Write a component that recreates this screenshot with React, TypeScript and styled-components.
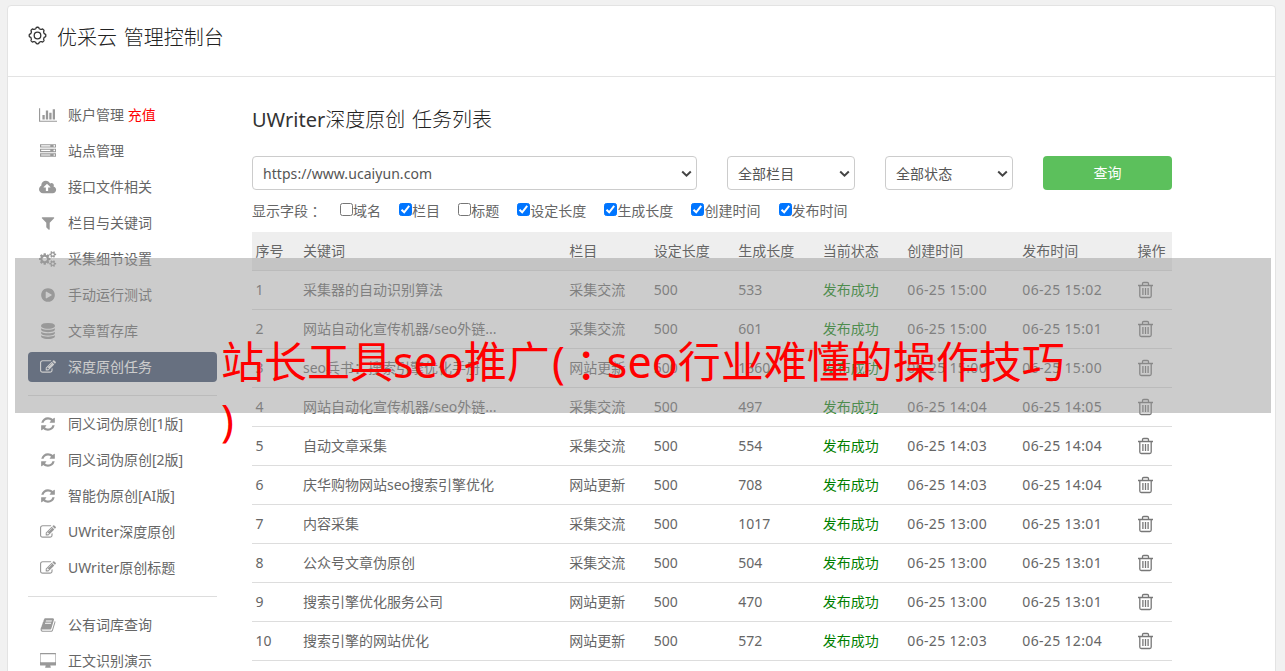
import React from 'react';
import styled, { createGlobalStyle } from 'styled-components';

const GlobalStyle = createGlobalStyle`
  * { box-sizing: border-box; }
  html, body { margin: 0; padding: 0; }
  body {
    height: 671px;
    overflow: hidden;
    background: #f1f1f1;
    color: #666;
    font-family: "Noto Sans", "Noto Sans CJK SC", sans-serif;
    font-weight: 400;
    font-size: 14px;
    line-height: 20px;
  }
`;

const Page = styled.div`
  position: relative;
  height: 671px;
  padding: 5px 9px 0 7px;
  overflow: hidden;
`;

const Panel = styled.main`
  height: 700px;
  background: #fff;
  border: 1px solid #e3e3e3;
  border-radius: 4px;
`;

const Header = styled.header`
  display: flex;
  align-items: flex-start;
  height: 71px;
  padding: 19px 0 0 20px;
  border-bottom: 1px solid #e3e3e3;
`;

const Brand = styled.h1`
  margin: 1px 0 0 9px;
  color: #222;
  font-size: 20px;
  font-weight: 300;
  line-height: 24px;
  white-space: pre;
  word-spacing: 1.5px;
`;

const Columns = styled.div`
  display: flex;
  align-items: flex-start;
`;

const Sidebar = styled.nav`
  width: 189px;
  margin: 23px 35px 0 20px;
`;

const NavItem = styled.a<{ $active?: boolean }>`
  display: flex;
  align-items: center;
  height: 30px;
  margin-bottom: 6px;
  padding-left: 10px;
  border-radius: 4px;
  white-space: pre;
  color: ${(p) => (p.$active ? '#fff' : '#666')};
  background: ${(p) => (p.$active ? '#354767' : 'transparent')};
`;

const IconSlot = styled.span<{ $active?: boolean }>`
  display: flex;
  justify-content: center;
  width: 20px;
  margin-right: 10px;
  color: ${(p) => (p.$active ? '#fff' : '#999')};
`;

const Recharge = styled.span`
  color: #f00;
`;

const Divider = styled.hr`
  height: 1px;
  margin: 13px 0;
  border: 0;
  background: #ddd;
`;

const Content = styled.section`
  width: 920px;
`;

const Title = styled.h2`
  height: 26px;
  margin: 30px 0 23px;
  color: #222;
  font-size: 20px;
  font-weight: 300;
  line-height: 26px;
  white-space: nowrap;
  word-spacing: 1.5px;
`;

const TitleLatin = styled.span`
  color: #333;
  font-weight: 400;
`;

const Filters = styled.div`
  display: grid;
  grid-template-columns: 445px 128px 128px 129px;
  column-gap: 30px;
  height: 34px;
`;

const SelectBox = styled.div`
  display: flex;
  align-items: center;
  justify-content: space-between;
  padding: 1px 4px 0 10px;
  border: 1px solid #ccc;
  border-radius: 4px;
  color: #555;
  letter-spacing: 0.06px;
`;

const SearchButton = styled.button`
  padding: 0;
  border: 0;
  border-radius: 4px;
  background: #5cc05c;
  color: #fff;
  font: inherit;
`;

const Fields = styled.div`
  display: flex;
  align-items: center;
  height: 20px;
  margin: 11px 0 11px;
`;

const FieldsLabel = styled.span`
  width: 88px;
`;

const CenteredColon = styled.span`
  font-family: "Noto Sans CJK TC", sans-serif;
  line-height: 0;
  vertical-align: -0.1em;
`;

const Field = styled.label`
  display: flex;
  align-items: center;
  margin-right: 18.1px;
`;

const Check = styled.span<{ $on: boolean }>`
  display: flex;
  width: 13px;
  height: 13px;
  margin-top: -3px;
  border: 1px solid ${(p) => (p.$on ? '#0075ff' : '#767676')};
  border-radius: 2.5px;
  background: ${(p) => (p.$on ? '#0075ff' : '#fff')};
`;

const Table = styled.div`
  width: 920px;
`;

const Row = styled.div<{ $head?: boolean }>`
  display: grid;
  grid-template-columns: 47.5px 266.3px 84.5px 84.5px 84.5px 84.5px 115px 115.2px 1fr;
  align-items: center;
  height: 39px;
  padding-left: 3.5px;
  border-bottom: 1px solid #ddd;
  background: ${(p) => (p.$head ? '#eee' : 'transparent')};
  white-space: nowrap;
`;

const Status = styled.span`
  color: #008000;
`;

const Stamp = styled.span`
  letter-spacing: 0.34px;
`;

const Banner = styled.div`
  position: absolute;
  left: 15px;
  top: 258px;
  width: 1256px;
  height: 155px;
  background: rgba(153, 153, 153, 0.5);
`;

const Headline = styled.div`
  position: absolute;
  left: 221px;
  top: 331px;
  width: 850px;
  color: #f00;
  font-size: 43px;
  font-weight: 400;
  line-height: 62px;
  white-space: nowrap;
`;

const OpenParen = styled.span`
  margin: 0 -1px 0 2px;
`;

const WideColon = styled(CenteredColon)`
  margin: 0 -1px 0 1px;
`;

const HeadlineTail = styled.div`
  margin-top: -4px;
`;

const paths = {
  chart: 'M640 896v512h-256v-512h256zm384-512v1024h-256v-1024h256zm1024 1152v128h-2048v-1536h128v1408h1920zm-640-896v768h-256v-768h256zm384-384v1152h-256v-1152h256z',
  server: 'M128 1408h1024v-128h-1024v128zm0-512h1024v-128h-1024v128zm1568 448q0-40-28-68t-68-28-68 28-28 68 28 68 68 28 68-28 28-68zm-1568-960h1024v-128h-1024v128zm1568 448q0-40-28-68t-68-28-68 28-28 68 28 68 68 28 68-28 28-68zm0-512q0-40-28-68t-68-28-68 28-28 68 28 68 68 28 68-28 28-68zm96 832v384h-1792v-384h1792zm0-512v384h-1792v-384h1792zm0-512v384h-1792v-384h1792z',
  cloud: 'M1280 928q0-14-9-23l-352-352q-9-9-23-9t-23 9l-351 351q-10 12-10 24 0 14 9 23t23 9h224v352q0 13 9.5 22.5t22.5 9.5h192q13 0 22.5-9.5t9.5-22.5v-352h224q13 0 22.5-9.5t9.5-22.5zm640 288q0 159-112.5 271.5t-271.5 112.5h-1088q-185 0-316.5-131.5t-131.5-316.5q0-130 70-240t188-165q-2-30-2-43 0-212 150-362t362-150q156 0 285.5 87t188.5 231q71-62 166-62 106 0 181 75t75 181q0 76-41 138 130 31 213.5 135.5t83.5 238.5z',
  filter: 'M1595 295q17 41-14 70l-493 493v742q0 42-39 59-13 5-25 5-27 0-45-19l-256-256q-19-19-19-45v-486l-493-493q-31-29-14-70 17-39 59-39h1280q42 0 59 39z',
  cogs: 'M896 896q0-106-75-181t-181-75-181 75-75 181 75 181 181 75 181-75 75-181zm768 512q0-52-38-90t-90-38-90 38-38 90q0 53 37.5 90.5t90.5 37.5 90.5-37.5 37.5-90.5zm0-1024q0-52-38-90t-90-38-90 38-38 90q0 53 37.5 90.5t90.5 37.5 90.5-37.5 37.5-90.5zm-384 421v185q0 10-7 19.5t-16 10.5l-155 24q-11 35-32 76 34 48 90 115 7 11 7 20 0 12-7 19-23 30-82.5 89.5t-78.5 59.5q-11 0-21-7l-115-90q-37 19-77 31-11 108-23 155-7 24-30 24h-186q-11 0-20-7.5t-10-17.5l-23-153q-34-10-75-31l-118 89q-7 7-20 7-11 0-21-8-144-133-144-160 0-9 7-19 10-14 41-53t47-61q-23-44-35-82l-152-24q-10-1-17-9.5t-7-19.5v-185q0-10 7-19.5t16-10.5l155-24q11-35 32-76-34-48-90-115-7-11-7-20 0-12 7-20 22-30 82-89t79-59q11 0 21 7l115 90q34-18 77-32 11-108 23-154 7-24 30-24h186q11 0 20 7.5t10 17.5l23 153q34 10 75 31l118-89q8-7 20-7 11 0 21 8 144 133 144 160 0 8-7 19-12 16-42 54t-45 60q23 48 34 82l152 23q10 2 17 10.5t7 19.5zm640 533v140q0 16-149 31-12 27-30 52 51 113 51 138 0 4-4 7-122 71-124 71-8 0-46-47t-52-68q-20 2-30 2t-30-2q-14 21-52 68t-46 47q-2 0-124-71-4-3-4-7 0-25 51-138-18-25-30-52-149-15-149-31v-140q0-16 149-31 13-29 30-52-51-113-51-138 0-4 4-7 4-2 35-20t59-34 30-16q8 0 46 46.5t52 67.5q20-2 30-2t30 2q51-71 92-112l6-2q4 0 124 70 4 3 4 7 0 25-51 138 17 23 30 52 149 15 149 31zm0-1024v140q0 16-149 31-12 27-30 52 51 113 51 138 0 4-4 7-122 71-124 71-8 0-46-47t-52-68q-20 2-30 2t-30-2q-14 21-52 68t-46 47q-2 0-124-71-4-3-4-7 0-25 51-138-18-25-30-52-149-15-149-31v-140q0-16 149-31 13-29 30-52-51-113-51-138 0-4 4-7 4-2 35-20t59-34 30-16q8 0 46 46.5t52 67.5q20-2 30-2t30 2q51-71 92-112l6-2q4 0 124 70 4 3 4 7 0 25-51 138 17 23 30 52 149 15 149 31z',
  play: 'M896 128q209 0 385.5 103t279.5 279.5 103 385.5-103 385.5-279.5 279.5-385.5 103-385.5-103-279.5-279.5-103-385.5 103-385.5 279.5-279.5 385.5-103zm384 823q32-18 32-55t-32-55l-544-320q-31-19-64-1-32 19-32 56v640q0 37 32 56 16 8 32 8 17 0 32-9z',
  database: 'M896 768q237 0 443-43t325-127v170q0 69-103 128t-280 93.5-385 34.5-385-34.5-280-93.5-103-128v-170q119 84 325 127t443 43zm0 768q237 0 443-43t325-127v170q0 69-103 128t-280 93.5-385 34.5-385-34.5-280-93.5-103-128v-170q119 84 325 127t443 43zm0-384q237 0 443-43t325-127v170q0 69-103 128t-280 93.5-385 34.5-385-34.5-280-93.5-103-128v-170q119 84 325 127t443 43zm0-1152q208 0 385 34.5t280 93.5 103 128v128q0 69-103 128t-280 93.5-385 34.5-385-34.5-280-93.5-103-128v-128q0-69 103-128t280-93.5 385-34.5z',
  edit: 'M888 1184l116-116-152-152-116 116v56h96v96h56zm440-720q-16-16-33 1l-350 350q-17 17-1 33t33-1l350-350q17-17 1-33zm80 594v190q0 119-84.5 203.5t-203.5 84.5h-832q-119 0-203.5-84.5t-84.5-203.5v-832q0-119 84.5-203.5t203.5-84.5h832q63 0 117 25 15 7 18 23 3 17-9 29l-49 49q-14 14-32 8-23-6-45-6h-832q-66 0-113 47t-47 113v832q0 66 47 113t113 47h832q66 0 113-47t47-113v-126q0-13 9-22l64-64q15-15 35-7t20 29zm-96-738l288 288-672 672h-288v-288zm444 132l-92 92-288-288 92-92q28-28 68-28t68 28l152 152q28 28 28 68t-28 68z',
  refresh: 'M1639 1056q0 5-1 7-64 268-268 434.5t-478 166.5q-146 0-282.5-55t-243.5-157l-129 129q-19 19-45 19t-45-19-19-45v-448q0-26 19-45t45-19h448q26 0 45 19t19 45-19 45l-137 137q71 66 161 102t187 36q134 0 250-65t186-179q11-17 53-117 8-23 30-23h192q13 0 22.5 9.5t9.5 22.5zm25-800v448q0 26-19 45t-45 19h-448q-26 0-45-19t-19-45 19-45l138-138q-148-137-349-137-134 0-250 65t-186 179q-11 17-53 117-8 23-30 23h-199q-13 0-22.5-9.5t-9.5-22.5v-7q65-268 270-434.5t480-166.5q146 0 284 55.5t245 156.5l130-129q19-19 45-19t45 19 19 45z',
  book: 'M1703 478q40 57 18 129l-275 906q-19 64-76.5 107.5t-122.5 43.5h-923q-77 0-148.5-53.5t-99.5-131.5q-24-67-2-127 0-4 3-27t4-37q1-8-3-21.5t-3-19.5q2-11 8-21t16.5-23.5 16.5-23.5q23-38 45-91.5t30-91.5q3-10 .5-30t-.5-28q3-11 17-28t17-23q21-36 42-92t25-90q1-9-2.5-32t.5-28q4-13 22-30.5t22-22.5q19-26 42.5-84.5t27.5-96.5q1-8-3-25.5t-2-26.5q2-8 9-18t18-23 17-21q8-12 16.5-30.5t15-35 16-36 19.5-32 26.5-23.5 36-11.5 47.5 5.5l-1 3q38-9 51-9h761q74 0 114 56t18 130l-274 906q-36 119-71.5 153.5t-128.5 34.5h-869q-27 0-38 15-11 16-1 43 24 70 144 70h923q29 0 56-15.5t35-41.5l300-987q7-22 5-57 38 15 59 43zm-1064 2q-4 13 2 22.5t20 9.5h608q13 0 25.5-9.5t16.5-22.5l21-64q4-13-2-22.5t-20-9.5h-608q-13 0-25.5 9.5t-16.5 22.5zm-83 256q-4 13 2 22.5t20 9.5h608q13 0 25.5-9.5t16.5-22.5l21-64q4-13-2-22.5t-20-9.5h-608q-13 0-25.5 9.5t-16.5 22.5z',
  desktop: 'M1728 992v-832q0-13-9.5-22.5t-22.5-9.5h-1600q-13 0-22.5 9.5t-9.5 22.5v832q0 13 9.5 22.5t22.5 9.5h1600q13 0 22.5-9.5t9.5-22.5zm128-832v1088q0 66-47 113t-113 47h-544q0 37 16 77.5t32 71 16 43.5q0 26-19 45t-45 19h-512q-26 0-45-19t-19-45q0-14 16-44t32-70 16-78h-544q-66 0-113-47t-47-113v-1088q0-66 47-113t113-47h1600q66 0 113 47t47 113z',
};

type IconName = keyof typeof paths;

const viewWidths: Partial<Record<IconName, number>> = { chart: 2048, cloud: 1920, cogs: 1920, desktop: 1856 };

function NavIcon({ name }: { name: IconName }) {
  const w = viewWidths[name] ?? 1792;
  return (
    <svg width={(w / 1792) * 16} height="16" viewBox={`0 0 ${w} 1792`} fill="currentColor" fillRule="evenodd">
      <path d={paths[name]} />
    </svg>
  );
}

function gearOutline() {
  const pts: string[] = [];
  for (let i = 0; i <= 144; i++) {
    const a = (i / 144) * Math.PI * 2;
    const r = 7.6 + 0.7 * Math.tanh(2.2 * Math.cos(8 * a));
    pts.push(`${(9.5 + r * Math.sin(a)).toFixed(2)} ${(10.5 - r * Math.cos(a)).toFixed(2)}`);
  }
  return `M${pts.join('L')}Z`;
}

const GearIcon = () => (
  <svg width="20" height="20" viewBox="0 0 20 20" fill="none" stroke="#333" strokeWidth="1.3">
    <path d={gearOutline()} />
    <circle cx="9.5" cy="10.5" r="3.3" />
  </svg>
);

const TrashSvg = styled.svg`
  display: block;
  margin-left: 1px;
`;

const TrashIcon = () => (
  <TrashSvg width="16" height="18" viewBox="0 0 16 18" fill="none" stroke="#777" strokeWidth="1.3">
    <path d="M0 4.500h15M4.500 4V2.500Q4.500 1.500 5.700 1.500h3.600q1.200 0 1.200 1.000V4M1.800 4.500v10.500q0 1.500 1.500 1.500h8.400q1.500 0 1.500-1.500V4.500M4.900 7v7M7.500 7v7M10.100 7v7" />
  </TrashSvg>
);

const Chevron = () => (
  <svg width="11" height="8" viewBox="0 0 11 8" fill="none" stroke="#444" strokeWidth="2">
    <path d="M1.200 1.500l4.300 4.200 4.300-4.200" />
  </svg>
);

const Tick = () => (
  <svg width="11" height="11" viewBox="0 0 11 11" fill="none" stroke="#fff" strokeWidth="2">
    <path d="M1.500 5.700l2.700 2.600 5-6.400" />
  </svg>
);

interface NavEntry {
  icon: IconName;
  label: string;
  extra?: string;
  active?: boolean;
}

const groups: NavEntry[][] = [
  [
    { icon: 'chart', label: '账户管理', extra: '充值' },
    { icon: 'server', label: '站点管理' },
    { icon: 'cloud', label: '接口文件相关' },
    { icon: 'filter', label: '栏目与关键词' },
    { icon: 'cogs', label: '采集细节设置' },
    { icon: 'play', label: '手动运行测试' },
    { icon: 'database', label: '文章暂存库' },
    { icon: 'edit', label: '深度原创任务', active: true },
  ],
  [
    { icon: 'refresh', label: '同义词伪原创[1版]' },
    { icon: 'refresh', label: '同义词伪原创[2版]' },
    { icon: 'refresh', label: '智能伪原创[AI版]' },
    { icon: 'edit', label: 'UWriter深度原创' },
    { icon: 'edit', label: 'UWriter原创标题' },
  ],
  [
    { icon: 'book', label: '公有词库查询' },
    { icon: 'desktop', label: '正文识别演示' },
  ],
];

const fields: [string, boolean][] = [
  ['域名', false],
  ['栏目', true],
  ['标题', false],
  ['设定长度', true],
  ['生成长度', true],
  ['创建时间', true],
  ['发布时间', true],
];

const headings = ['序号', '关键词', '栏目', '设定长度', '生成长度', '当前状态', '创建时间', '发布时间', '操作'];

const tasks = [
  ['采集器的自动识别算法', '采集交流', '533', '06-25 15:00', '06-25 15:02'],
  ['网站自动化宣传机器/seo外链...', '采集交流', '601', '06-25 15:00', '06-25 15:01'],
  ['seo兵书：搜索引擎优化手册', '网站更新', '1360', '06-25 15:00', '06-25 15:00'],
  ['网站自动化宣传机器/seo外链...', '采集交流', '497', '06-25 14:04', '06-25 14:05'],
  ['自动文章采集', '采集交流', '554', '06-25 14:03', '06-25 14:04'],
  ['庆华购物网站seo搜索引擎优化', '网站更新', '708', '06-25 14:03', '06-25 14:04'],
  ['内容采集', '采集交流', '1017', '06-25 13:00', '06-25 13:01'],
  ['公众号文章伪原创', '采集交流', '504', '06-25 13:00', '06-25 13:01'],
  ['搜索引擎优化服务公司', '网站更新', '470', '06-25 13:00', '06-25 13:01'],
  ['搜索引擎的网站优化', '网站更新', '572', '06-25 12:03', '06-25 12:04'],
];

export default function App() {
  return (
    <Page>
      <GlobalStyle />
      <Panel>
        <Header>
          <GearIcon />
          <Brand>优采云 管理控制台</Brand>
        </Header>
        <Columns>
          <Sidebar>
            {groups.map((group, g) => (
              <React.Fragment key={g}>
                {g > 0 && <Divider />}
                {group.map((item) => (
                  <NavItem key={item.label} $active={item.active}>
                    <IconSlot $active={item.active}>
                      <NavIcon name={item.icon} />
                    </IconSlot>
                    {item.label}
                    {item.extra && <Recharge> {item.extra}</Recharge>}
                  </NavItem>
                ))}
              </React.Fragment>
            ))}
          </Sidebar>
          <Content>
            <Title><TitleLatin>UWriter</TitleLatin>深度原创 任务列表</Title>
            <Filters>
              <SelectBox>https://www.ucaiyun.com<Chevron /></SelectBox>
              <SelectBox>全部栏目<Chevron /></SelectBox>
              <SelectBox>全部状态<Chevron /></SelectBox>
              <SearchButton>查询</SearchButton>
            </Filters>
            <Fields>
              <FieldsLabel>显示字段<CenteredColon>：</CenteredColon></FieldsLabel>
              {fields.map(([name, on]) => (
                <Field key={name}>
                  <Check $on={on}>{on && <Tick />}</Check>
                  {name}
                </Field>
              ))}
            </Fields>
            <Table>
              <Row $head>
                {headings.map((h) => (
                  <span key={h}>{h}</span>
                ))}
              </Row>
              {tasks.map(([keyword, column, length, created, published], i) => (
                <Row key={i}>
                  <span>{i + 1}</span>
                  <span>{keyword}</span>
                  <span>{column}</span>
                  <span>500</span>
                  <span>{length}</span>
                  <Status>发布成功</Status>
                  <Stamp>{created}</Stamp>
                  <Stamp>{published}</Stamp>
                  <TrashIcon />
                </Row>
              ))}
            </Table>
          </Content>
        </Columns>
      </Panel>
      <Banner />
      <Headline>
        站长工具seo推广<OpenParen>(</OpenParen><WideColon>：</WideColon>seo行业难懂的操作技巧
        <HeadlineTail>)</HeadlineTail>
      </Headline>
    </Page>
  );
}
